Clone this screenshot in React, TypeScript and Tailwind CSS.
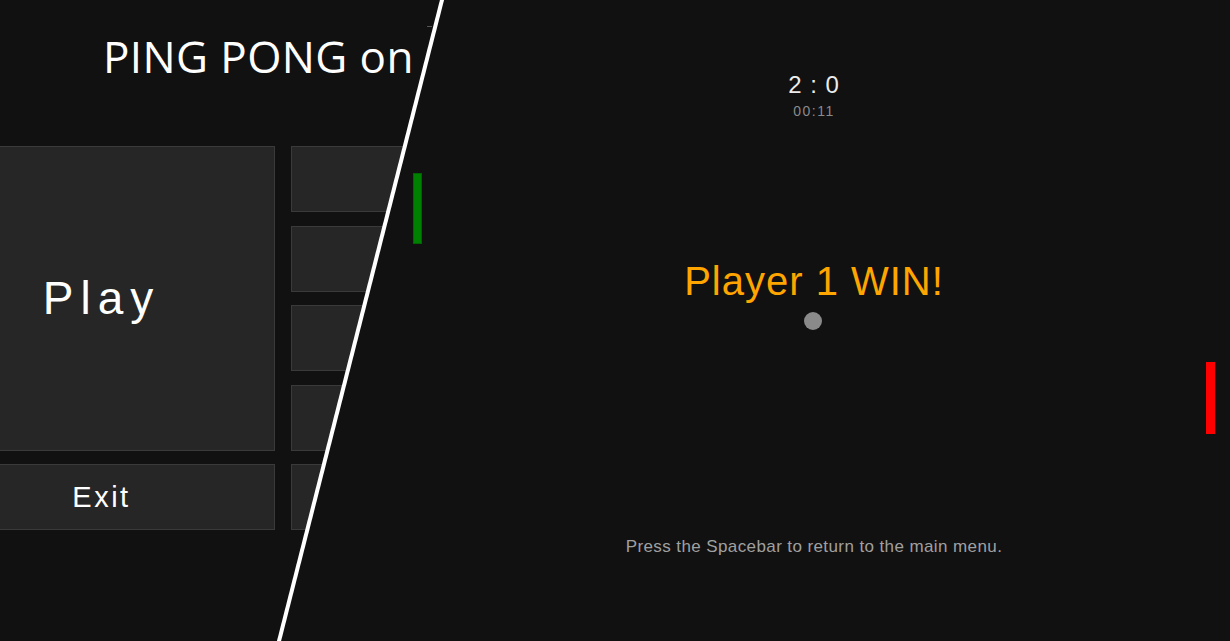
const sideButtons = [0, 1, 2, 3];

function MenuPanel() {
  return (
    <div className="absolute inset-0 bg-[#111111] [clip-path:polygon(0_0,442px_0,279px_641px,0_641px)]">
      <div className="pt-[34px] pl-[103px]">
        <h1 className="text-[44px] leading-none tracking-[0.4px] text-white font-['Open_Sans',sans-serif] whitespace-nowrap">
          PING PONG on
        </h1>
      </div>

      <div className="mt-[68px] -ml-[72px] grid grid-cols-[347px_120px] grid-rows-[repeat(5,66px)] gap-x-[16px] gap-y-[13.5px]">
        <button className="row-span-4 flex items-center justify-center border border-[#3a3a3a] bg-[#262626] text-[46px] leading-none tracking-[7px] text-white font-['Liberation_Sans',sans-serif]">
          Play
        </button>
        {sideButtons.map((i) => (
          <div key={i} className="col-start-2 border border-[#3a3a3a] bg-[#262626]" />
        ))}
        <button className="flex items-center justify-center border border-[#3a3a3a] bg-[#262626] text-[29px] leading-none tracking-[2.5px] text-white font-['Liberation_Sans',sans-serif]">
          Exit
        </button>
        <div className="border border-[#3a3a3a] bg-[#262626]" />
      </div>

      <div className="absolute left-[427px] top-[26px] h-px w-[5px] bg-[#555555]" />
    </div>
  );
}

function GameView() {
  return (
    <section className="relative flex flex-1 flex-col items-center font-['Liberation_Sans',sans-serif]">
      <div className="pt-[73px] text-[24px] leading-none tracking-[1px] text-[#ececec]">2 : 0</div>
      <div className="mt-[7px] text-[14px] leading-none tracking-[1.5px] text-[#8a8a8a]">00:11</div>
      <div className="mt-[143px] text-[40px] leading-none tracking-[1px] text-[#ffa500]">Player 1 WIN!</div>
      <div className="mt-[237px] text-[17px] leading-none tracking-[0.4px] text-[#a0a0a0]">
        Press the Spacebar to return to the main menu.
      </div>

      {/* paddles and ball */}
      <div className="absolute left-[15px] top-[173px] h-[71px] w-[9px] border border-[#006400] bg-[#008000]" />
      <div className="absolute right-[15px] top-[362px] h-[72px] w-[9px] bg-[#ff0000]" />
      <div className="absolute left-[406px] top-[312px] h-[18px] w-[18px] rounded-full bg-[#8a8a8a]" />
    </section>
  );
}

export default function App() {
  return (
    <div className="relative flex h-[641px] w-[1230px] overflow-hidden bg-[#111111]">
      <div className="w-[398px] shrink-0" />
      <GameView />
      <MenuPanel />
      <svg className="pointer-events-none absolute inset-0" width="1230" height="641">
        <line x1="443" y1="-4" x2="278" y2="645" stroke="#ffffff" strokeWidth="4" />
      </svg>
    </div>
  );
}
